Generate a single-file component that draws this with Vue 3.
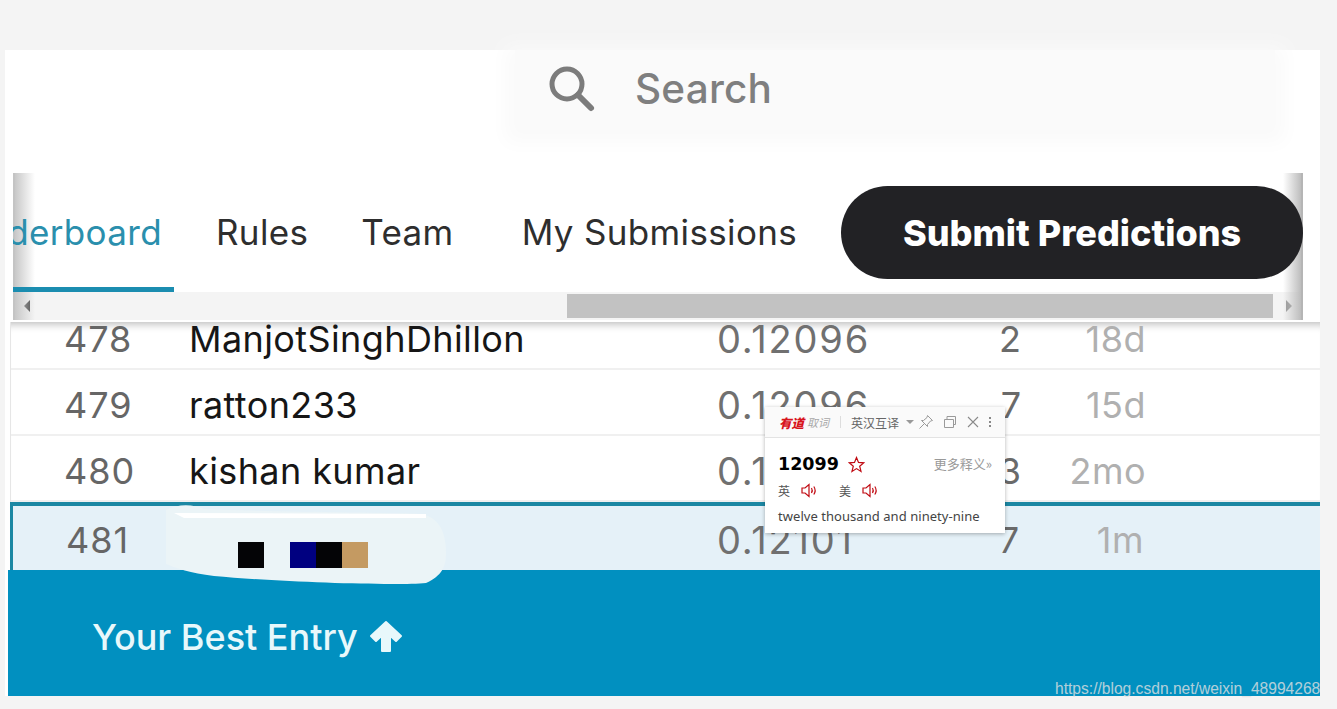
<script setup>
const rows = [
  { rank: 478, name: 'ManjotSinghDhillon', score: '0.12096', entries: 2, last: '18d' },
  { rank: 479, name: 'ratton233', score: '0.12096', entries: 7, last: '15d' },
  { rank: 480, name: 'kishan kumar', score: '0.12099', entries: 3, last: '2mo' },
]
</script>

<template>
  <div class="page">
    <div class="sheet">
      <!-- search -->
      <header class="top">
        <div class="search">
          <svg class="search-icon" width="50" height="50" viewBox="0 0 50 50" fill="none">
            <circle cx="20" cy="20" r="15" stroke="#7c7c7c" stroke-width="5" />
            <path d="M31 31 L44 44" stroke="#7c7c7c" stroke-width="6" stroke-linecap="round" />
          </svg>
          <span class="search-text">Search</span>
        </div>
      </header>

      <!-- tabs + scrollbar -->
      <section class="tabbar">
        <div class="tabs">
          <div class="tab active"><span>Leaderboard</span></div>
          <div class="tab rules">Rules</div>
          <div class="tab team">Team</div>
          <div class="tab subs">My Submissions</div>
          <button class="submit">Submit Predictions</button>
        </div>
        <div class="scrollbar">
          <span class="arrow left"></span>
          <div class="track"><div class="thumb"></div></div>
          <span class="arrow right"></span>
        </div>
        <div class="fade fade-l"></div>
        <div class="fade fade-r"></div>
      </section>

      <!-- leaderboard -->
      <div class="rows">
        <div v-for="r in rows" :key="r.rank" class="row">
          <span class="rank">{{ r.rank }}</span>
          <span class="name">{{ r.name }}</span>
          <span class="score">{{ r.score }}</span>
          <span class="entries">{{ r.entries }}</span>
          <span class="last">{{ r.last }}</span>
        </div>
        <div class="row mine">
          <span class="rank">481</span>
          <span class="name"></span>
          <span class="score">0.12101</span>
          <span class="entries">7</span>
          <span class="last">1m</span>
          <svg class="scribble" width="300" height="92" viewBox="0 0 300 92">
            <path d="M8 6 C20 0 34 0 46 5 C110 8 220 8 264 10 C280 14 288 26 288 50 C288 62 284 72 268 79 C236 82 120 78 56 72 C32 69 18 64 8 60 Z" fill="#ebf4f7" />
            <path d="M16 9 L268 10 L268 14 L26 14 Z" fill="#ffffff" />
          </svg>
          <div class="blocks">
            <i class="b-black"></i>
            <i class="b-gap"></i>
            <i class="b-navy"></i>
            <i class="b-black"></i>
            <i class="b-tan"></i>
          </div>
        </div>
      </div>

      <!-- best entry -->
      <footer class="best">
        <span>Your Best Entry</span>
        <svg class="up" width="34" height="34" viewBox="0 0 34 34">
          <path d="M17 2 L32 16 L27 21 L21 15.5 L21 31 L13 31 L13 15.5 L7 21 L2 16 Z" fill="#e8f8fb" stroke="#e8f8fb" stroke-width="2" stroke-linejoin="round" />
        </svg>
      </footer>
    </div>

    <!-- dictionary popup -->
    <aside class="dict">
      <div class="dict-head">
        <span class="logo">有道</span>
        <span class="fetch">取词</span>
        <span class="sep"></span>
        <span class="mode">英汉互译</span>
        <span class="caret"></span>
        <svg class="tool pin" width="16" height="16" viewBox="0 0 16 16" fill="none" stroke="#9a9a9a" stroke-width="1">
          <path d="M9.5 1.5 L14.5 6.5 L12.5 7 L9.5 10.5 L9.5 12.5 L3.5 6.5 L5.5 6.5 L9 3.5 Z M6 10 L1.5 14.5" />
        </svg>
        <svg class="tool copy" width="14" height="14" viewBox="0 0 14 14" fill="none" stroke="#9a9a9a" stroke-width="1">
          <path d="M1.5 4.5 H10.5 V12.5 H1.5 Z M4 4.5 V1.5 H12.5 V9.5 H10.5" />
        </svg>
        <svg class="tool close" width="12" height="12" viewBox="0 0 12 12" fill="none" stroke="#8a8a8a" stroke-width="1.1">
          <path d="M1 1 L11 11 M11 1 L1 11" />
        </svg>
        <span class="dots"><i></i><i></i><i></i></span>
      </div>
      <div class="dict-body">
        <div class="word-line">
          <strong class="word">12099</strong>
          <svg width="17" height="17" viewBox="0 0 17 17" fill="none" stroke="#c00a12" stroke-width="1.2">
            <path d="M8.5 1.5 L10.5 6.4 L15.8 6.8 L11.7 10.2 L13 15.4 L8.5 12.6 L4 15.4 L5.3 10.2 L1.2 6.8 L6.5 6.4 Z" />
          </svg>
          <span class="more">更多释义»</span>
        </div>
        <div class="phon">
          <span>英</span>
          <svg width="17" height="15" viewBox="0 0 17 15" fill="none" stroke="#c00a12" stroke-width="1.2">
            <path d="M1 5 H4 L8 1.5 V13.5 L4 10 H1 Z M10.5 5 Q12 7.5 10.5 10 M12.8 3.5 Q15.5 7.5 12.8 11.5" />
          </svg>
          <span class="us">美</span>
          <svg width="17" height="15" viewBox="0 0 17 15" fill="none" stroke="#c00a12" stroke-width="1.2">
            <path d="M1 5 H4 L8 1.5 V13.5 L4 10 H1 Z M10.5 5 Q12 7.5 10.5 10 M12.8 3.5 Q15.5 7.5 12.8 11.5" />
          </svg>
        </div>
        <p class="meaning">twelve thousand and ninety-nine</p>
      </div>
    </aside>

    <div class="watermark">https://blog.csdn.net/weixin_48994268</div>
  </div>
</template>

<style>
html, body {
  background: #f4f4f4;
  overflow: hidden;
}
</style>

<style scoped>
.page {
  position: relative;
  height: 709px;
  padding: 50px 17px 13px 5px;
  box-sizing: border-box;
  background: #f4f4f4;
  overflow: hidden;
  font-family: Inter, "Liberation Sans", sans-serif;
}

.sheet {
  height: 646px;
  display: flex;
  flex-direction: column;
  background: #fff;
}

/* search */
.top {
  height: 123px;
  flex: none;
  padding-left: 510px;
}
.search {
  width: 760px;
  height: 77px;
  display: flex;
  align-items: center;
  padding: 0 0 0 32px;
  box-sizing: border-box;
  background: #fafafa;
  box-shadow: 0 6px 18px 10px #fafafa;
}
.search-text {
  margin-left: 38px;
  font-size: 40.5px;
  font-weight: 500;
  letter-spacing: 0.2px;
  color: #7f7f7f;
}

/* tabs */
.tabbar {
  position: relative;
  flex: none;
  height: 149px;
  margin-left: 8px;
  width: 1290px;
  background: #fff;
  z-index: 2;
}
.tabs {
  display: flex;
  align-items: flex-start;
  height: 119px;
  padding-top: 13px;
  box-sizing: border-box;
}
.tab {
  height: 93px;
  line-height: 93px;
  font-size: 35px;
  letter-spacing: 0.35px;
  color: #2e2e2e;
  white-space: nowrap;
}
.tab.active {
  position: relative;
  z-index: 1;
  width: 161px;
  height: 106px;
  display: flex;
  justify-content: flex-end;
  overflow: hidden;
  padding-right: 12px;
  box-sizing: border-box;
  color: #2a8fad;
  border-bottom: 5px solid #1b8db0;
}
.rules { margin-left: 42px; }
.team { margin-left: 53px; }
.subs { margin-left: 68px; }
.submit {
  position: relative;
  z-index: 1;
  margin-left: 44px;
  width: 462px;
  height: 93px;
  border: 0;
  border-radius: 47px;
  background: #222225;
  color: #fff;
  font-family: inherit;
  font-size: 36px;
  font-weight: 800;
  padding: 0;
}
.scrollbar {
  display: flex;
  align-items: center;
  height: 28px;
  background: #f4f4f4;
}
.arrow {
  flex: none;
  width: 0;
  height: 0;
  border-top: 6px solid transparent;
  border-bottom: 6px solid transparent;
}
.arrow.left {
  margin: 0 5px 0 11px;
  border-right: 6px solid #444;
}
.arrow.right {
  margin: 0 11px 0 13px;
  border-left: 6px solid #999;
}
.track {
  flex: 1;
  height: 24px;
  padding-left: 532px;
  box-sizing: border-box;
}
.thumb {
  height: 100%;
  background: #c2c2c2;
}
.fade {
  position: absolute;
  top: 0;
  bottom: 2px;
  width: 20px;
  pointer-events: none;
}
.fade-l {
  left: 0;
  border-left: 2px solid #c4c4c4;
  background: linear-gradient(90deg, #c8c8c8, rgba(255, 255, 255, 0));
}
.fade-r {
  right: 0;
  width: 18px;
  border-right: 2px solid #b5b5b5;
  background: linear-gradient(270deg, #bdbdbd, rgba(255, 255, 255, 0));
}

/* leaderboard */
.rows {
  flex: none;
  height: 248px;
  display: flex;
  flex-direction: column;
  border-left: 1px solid #e6e6e6;
  margin-left: 5px;
  box-shadow: inset 0 10px 8px -8px #b8b8b8;
}
.row {
  position: relative;
  display: grid;
  grid-template-columns: 125px 528px 267px 37px 125px;
  align-items: center;
  padding: 6px 0 0 53px;
  height: 66px;
  font-size: 36px;
  border-bottom: 2px solid #f0f0f0;
  color: #111;
  box-sizing: border-box;
}
.row:first-child {
  height: 48px;
  padding: 0 0 0 53px;
  align-items: start;
  line-height: 34px;
}
.rank {
  color: #666;
  letter-spacing: 1px;
}
.name {
  color: #161616;
  letter-spacing: 0.4px;
}
.score {
  color: #707070;
  font-size: 38px;
  letter-spacing: 1.8px;
}
.entries {
  text-align: right;
  color: #6a6a6a;
}
.last {
  text-align: right;
  color: #b0b0b0;
  letter-spacing: 0.5px;
}
.mine {
  height: 68px;
  padding-top: 4px;
  grid-template-columns: 125px 526px 269px 33px 125px;
  border-top: 4px solid #1b87a3;
  border-left: 3px solid #1b87a3;
  border-bottom: 0;
  margin-left: -1px;
  background: #e5f1f8;
}
.scribble {
  position: absolute;
  left: 145px;
  top: -2px;
  z-index: 1;
}
.blocks {
  position: absolute;
  left: 225px;
  top: 36px;
  display: flex;
  z-index: 1;
}
.blocks i {
  width: 26px;
  height: 26px;
}
.b-black { background: #040406; }
.b-gap { background: transparent; }
.b-navy { background: #000080; }
.b-tan { background: #c49a62; }

/* best entry */
.best {
  flex: 1;
  margin-left: 3px;
  display: flex;
  align-items: flex-start;
  gap: 11px;
  padding: 45px 0 0 84px;
  background: #0190c0;
  color: #e8f8fb;
  font-size: 36px;
  font-weight: 500;
}
.up {
  margin-top: 5px;
}

/* dictionary popup */
.dict {
  position: absolute;
  left: 765px;
  top: 407px;
  width: 240px;
  height: 126px;
  background: #fff;
  box-shadow: 0 1px 4px rgba(0, 0, 0, 0.3);
  font-family: "Noto Sans CJK SC", "Noto Sans", sans-serif;
  z-index: 5;
}
.dict-head {
  display: flex;
  align-items: center;
  height: 30px;
  padding-left: 14px;
  background: #fafafa;
  border-bottom: 1px solid #e3e3e3;
  color: #666;
  font-size: 12px;
}
.logo {
  color: #d8141c;
  font-weight: 900;
  font-style: italic;
  font-size: 12.5px;
}
.fetch {
  margin-left: 3px;
  color: #a8a8a8;
  font-style: italic;
  font-size: 11px;
}
.sep {
  width: 1px;
  height: 12px;
  margin: 0 10px 0 11px;
  background: #ddd;
}
.caret {
  margin-left: 7px;
  border-left: 4px solid transparent;
  border-right: 4px solid transparent;
  border-top: 4px solid #999;
}
.tool {
  flex: none;
}
.pin { margin-left: 4px; }
.copy { margin-left: 9px; }
.close { margin-left: 10px; }
.dots {
  display: flex;
  flex-direction: column;
  gap: 2px;
  margin-left: 10px;
}
.dots i {
  width: 2px;
  height: 2px;
  background: #888;
}
.dict-body {
  padding: 15px 13px 0 13px;
}
.word-line {
  display: flex;
  align-items: center;
  height: 22px;
}
.word {
  font-family: "DejaVu Sans", sans-serif;
  font-size: 17.5px;
  color: #000;
  margin-right: 9px;
}
.more {
  margin-left: auto;
  margin-top: -2px;
  color: #999;
  font-size: 13px;
}
.phon {
  display: flex;
  align-items: center;
  height: 18px;
  margin-top: 6px;
  font-size: 12px;
  color: #555;
}
.phon svg {
  margin-left: 11px;
}
.phon .us {
  margin-left: 21px;
}
.meaning {
  margin: 8px 0 0;
  font-family: "Noto Sans", sans-serif;
  font-size: 13px;
  line-height: 18px;
  letter-spacing: 0.05px;
  color: #444;
  white-space: nowrap;
}

.watermark {
  position: absolute;
  left: 1055px;
  top: 680px;
  width: 265px;
  overflow: hidden;
  white-space: nowrap;
  font-family: "Liberation Sans", sans-serif;
  font-size: 15.6px;
  color: rgba(225, 225, 225, 0.8);
  z-index: 6;
}
</style>
